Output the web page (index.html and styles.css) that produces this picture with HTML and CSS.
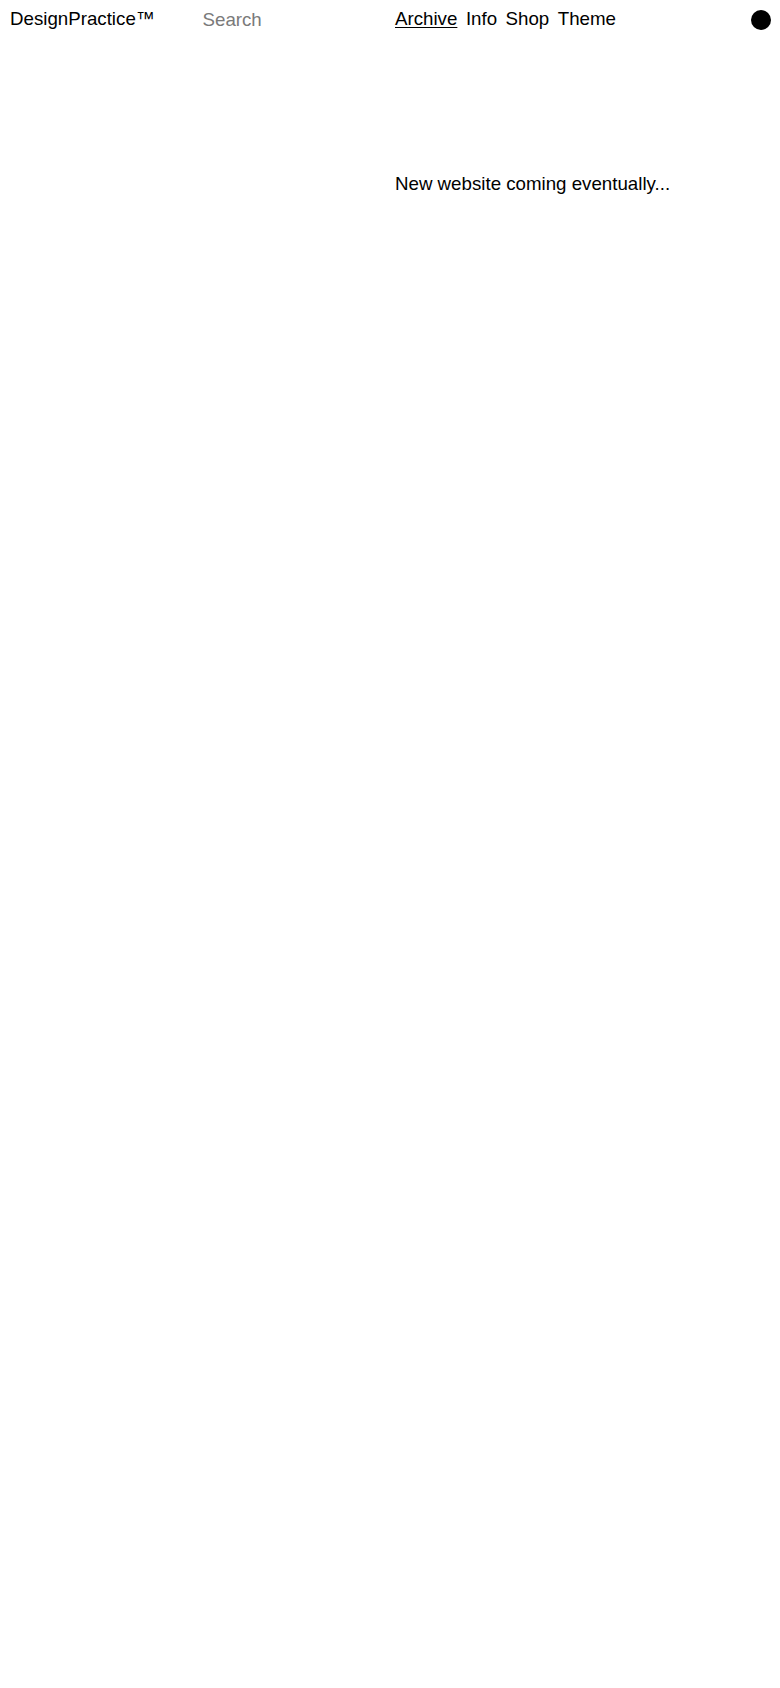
FILE: index.html
```html
<!DOCTYPE html>
<html lang="en">
<head>
<meta charset="utf-8">
<title>DesignPractice™</title>
<link rel="stylesheet" href="styles.css">
</head>
<body>
<header class="header">
  <a class="logo" href="#">DesignPractice™</a>
  <div class="search-cell">
    <input class="search" type="text" placeholder="Search">
  </div>
  <nav class="nav">
    <a class="nav-link active" href="#">Archive</a>
    <a class="nav-link" href="#">Info</a>
    <a class="nav-link" href="#">Shop</a>
    <a class="nav-link" href="#">Theme</a>
  </nav>
  <div class="dot-cell"><span class="dot"></span></div>
</header>
<main class="main">
  <p class="notice">New website coming eventually...</p>
</main>
</body>
</html>
```
FILE: styles.css
```css
* { box-sizing: border-box; }
html, body {
  margin: 0;
  padding: 0;
  background: #ffffff;
}
body {
  font-family: "Liberation Sans", Arial, sans-serif;
  font-size: 18.72px;
  color: #000;
  min-height: 1688px;
}
a { color: inherit; text-decoration: none; }
.header {
  display: grid;
  grid-template-columns: repeat(4, minmax(0, 1fr));
  column-gap: 10px;
  padding: 8px 10px 0 10px;
  align-items: start;
}
.logo { line-height: 21px; white-space: nowrap; }
.search-cell { line-height: 21px; min-width: 0; }
.search {
  display: block;
  font: inherit;
  border: 0;
  margin: 0;
  height: 22px;
  width: 100%;
  min-width: 0;
  outline: none;
  background: transparent;
  color: #000;
  padding: 1px 0 0 0;
}
.search::placeholder { color: #7a7a7a; }
.nav {
  display: flex;
  gap: 8.5px;
  line-height: 21px;
  white-space: nowrap;
}
.nav-link.active {
  text-decoration: underline;
  text-underline-offset: 2px;
  text-decoration-thickness: 1px;
}
.dot-cell {
  display: flex;
  justify-content: flex-end;
  height: 21px;
  align-items: center;
}
.dot {
  width: 20px;
  height: 20px;
  border-radius: 50%;
  background: #000;
  margin-top: 2px;
  margin-right: -1px;
}
.main {
  display: grid;
  grid-template-columns: repeat(4, minmax(0, 1fr));
  column-gap: 10px;
  padding: 0 10px;
}
.notice {
  grid-column: 3 / span 2;
  margin: 143px 0 0 0;
  line-height: 21px;
}
```
